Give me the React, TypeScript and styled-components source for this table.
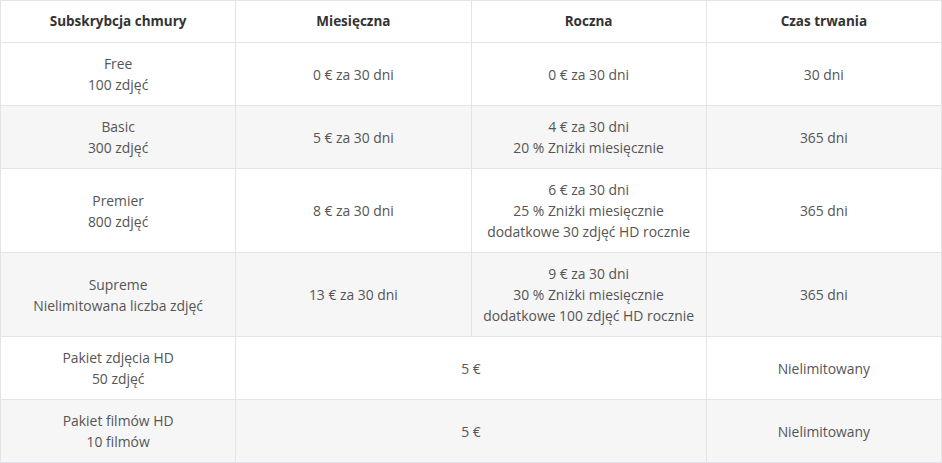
import styled, { createGlobalStyle } from "styled-components";

const GlobalStyle = createGlobalStyle`
  html, body {
    margin: 0;
    padding: 0;
    background: #ffffff;
  }
`;

const Table = styled.table`
  width: 942px;
  border-collapse: collapse;
  table-layout: fixed;
  font-family: "Open Sans", "Liberation Sans", sans-serif;
  font-size: 13.9px;
  line-height: 21px;
  color: #555555;
`;

const HeadCell = styled.th`
  border: 1px solid #e3e3e8;
  padding: 10px 8px;
  font-size: 13.5px;
  font-weight: 700;
  color: #333333;
  text-align: center;
`;

const Row = styled.tr<{ $alt?: boolean }>`
  background: ${(p) => (p.$alt ? "#f6f6f6" : "#ffffff")};
`;

const Cell = styled.td`
  border: 1px solid #e3e3e8;
  padding: 10px 8px;
  text-align: center;
  vertical-align: middle;
`;

interface PlanRow {
  name: string[];
  monthly?: string[];
  yearly: string[];
  duration: string;
}

const rows: PlanRow[] = [
  { name: ["Free", "100 zdjęć"], monthly: ["0 € za 30 dni"], yearly: ["0 € za 30 dni"], duration: "30 dni" },
  { name: ["Basic", "300 zdjęć"], monthly: ["5 € za 30 dni"], yearly: ["4 € za 30 dni", "20 % Zniżki miesięcznie"], duration: "365 dni" },
  {
    name: ["Premier", "800 zdjęć"],
    monthly: ["8 € za 30 dni"],
    yearly: ["6 € za 30 dni", "25 % Zniżki miesięcznie", "dodatkowe 30 zdjęć HD rocznie"],
    duration: "365 dni",
  },
  {
    name: ["Supreme", "Nielimitowana liczba zdjęć"],
    monthly: ["13 € za 30 dni"],
    yearly: ["9 € za 30 dni", "30 % Zniżki miesięcznie", "dodatkowe 100 zdjęć HD rocznie"],
    duration: "365 dni",
  },
  { name: ["Pakiet zdjęcia HD", "50 zdjęć"], yearly: ["5 €"], duration: "Nielimitowany" },
  { name: ["Pakiet filmów HD", "10 filmów"], yearly: ["5 €"], duration: "Nielimitowany" },
];

const Lines = ({ items }: { items: string[] }) => (
  <>
    {items.map((t, i) => (
      <div key={i}>{t}</div>
    ))}
  </>
);

const App = () => {
  return (
    <>
      <GlobalStyle />
      <Table>
        <thead>
          <tr>
            <HeadCell>Subskrybcja chmury</HeadCell>
            <HeadCell>Miesięczna</HeadCell>
            <HeadCell>Roczna</HeadCell>
            <HeadCell>Czas trwania</HeadCell>
          </tr>
        </thead>
        <tbody>
          {rows.map((r, i) => (
            <Row key={i} $alt={i % 2 === 1}>
              <Cell>
                <Lines items={r.name} />
              </Cell>
              {r.monthly ? (
                <>
                  <Cell>
                    <Lines items={r.monthly} />
                  </Cell>
                  <Cell>
                    <Lines items={r.yearly} />
                  </Cell>
                </>
              ) : (
                <Cell colSpan={2}>
                  <Lines items={r.yearly} />
                </Cell>
              )}
              <Cell>{r.duration}</Cell>
            </Row>
          ))}
        </tbody>
      </Table>
    </>
  );
};

export default App;
